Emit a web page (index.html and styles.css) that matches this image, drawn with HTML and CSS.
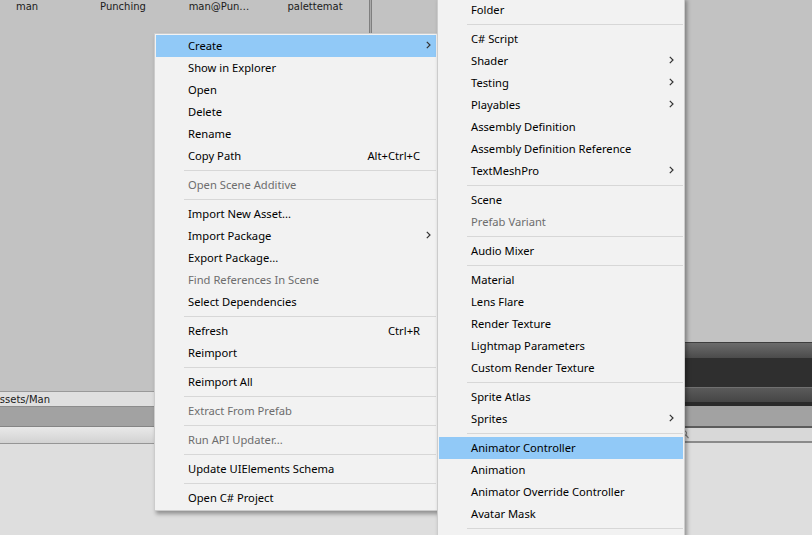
FILE: index.html
```html
<!DOCTYPE html>
<html>
<head>
<meta charset="utf-8">
<link rel="stylesheet" href="styles.css">
</head>
<body>
<div class="editor">
  <div class="left-panel">
    <div class="grid-area">
      <div class="grid-content">
        <div class="labels">
          <span class="label">man</span>
          <span class="label">Punching</span>
          <span class="label">man@Pun…</span>
          <span class="label">palettemat</span>
        </div>
      </div>
      <div class="splitter"></div>
      <div class="grid-rest"></div>
    </div>
    <div class="path-bar">Assets/Man</div>
    <div class="band"></div>
    <div class="toolbar"></div>
    <div class="panel-body"></div>
  </div>
  <div class="right-panel">
    <div class="rp-top"></div>
    <div class="rp-header"></div>
    <div class="rp-dark"></div>
    <div class="rp-header2"></div>
    <div class="rp-dark2"></div>
    <div class="rp-band"></div>
    <div class="search-bar">
      <svg class="search-icon" width="8" height="9" viewBox="0 0 8 9"><circle cx="3.2" cy="3.2" r="2.4" fill="none" stroke="#777" stroke-width="1"/><line x1="5" y1="5.2" x2="7.5" y2="8.2" stroke="#777" stroke-width="1.2"/></svg>
    </div>
    <div class="panel-body"></div>
  </div>
</div>

<div class="menu main-menu">
  <div class="item active"><span class="text">Create</span><span class="arrow"><svg width="5" height="8" viewBox="0 0 5 8"><polyline points="0.8,0.8 4,4 0.8,7.2" fill="none" stroke="#333" stroke-width="1.2"/></svg></span></div>
  <div class="item"><span class="text">Show in Explorer</span><span class="arrow"></span></div>
  <div class="item"><span class="text">Open</span><span class="arrow"></span></div>
  <div class="item"><span class="text">Delete</span><span class="arrow"></span></div>
  <div class="item"><span class="text">Rename</span><span class="arrow"></span></div>
  <div class="item"><span class="text">Copy Path</span><span class="shortcut">Alt+Ctrl+C</span><span class="arrow"></span></div>
  <div class="sep"></div>
  <div class="item disabled"><span class="text">Open Scene Additive</span><span class="arrow"></span></div>
  <div class="sep"></div>
  <div class="item"><span class="text">Import New Asset...</span><span class="arrow"></span></div>
  <div class="item"><span class="text">Import Package</span><span class="arrow"><svg width="5" height="8" viewBox="0 0 5 8"><polyline points="0.8,0.8 4,4 0.8,7.2" fill="none" stroke="#333" stroke-width="1.2"/></svg></span></div>
  <div class="item"><span class="text">Export Package...</span><span class="arrow"></span></div>
  <div class="item disabled"><span class="text">Find References In Scene</span><span class="arrow"></span></div>
  <div class="item"><span class="text">Select Dependencies</span><span class="arrow"></span></div>
  <div class="sep"></div>
  <div class="item"><span class="text">Refresh</span><span class="shortcut">Ctrl+R</span><span class="arrow"></span></div>
  <div class="item"><span class="text">Reimport</span><span class="arrow"></span></div>
  <div class="sep"></div>
  <div class="item"><span class="text">Reimport All</span><span class="arrow"></span></div>
  <div class="sep"></div>
  <div class="item disabled"><span class="text">Extract From Prefab</span><span class="arrow"></span></div>
  <div class="sep"></div>
  <div class="item disabled"><span class="text">Run API Updater...</span><span class="arrow"></span></div>
  <div class="sep"></div>
  <div class="item"><span class="text">Update UIElements Schema</span><span class="arrow"></span></div>
  <div class="sep"></div>
  <div class="item"><span class="text">Open C# Project</span><span class="arrow"></span></div>
</div>

<div class="menu sub-menu">
  <div class="item"><span class="text">Folder</span><span class="arrow"></span></div>
  <div class="sep"></div>
  <div class="item"><span class="text">C# Script</span><span class="arrow"></span></div>
  <div class="item"><span class="text">Shader</span><span class="arrow"><svg width="5" height="8" viewBox="0 0 5 8"><polyline points="0.8,0.8 4,4 0.8,7.2" fill="none" stroke="#333" stroke-width="1.2"/></svg></span></div>
  <div class="item"><span class="text">Testing</span><span class="arrow"><svg width="5" height="8" viewBox="0 0 5 8"><polyline points="0.8,0.8 4,4 0.8,7.2" fill="none" stroke="#333" stroke-width="1.2"/></svg></span></div>
  <div class="item"><span class="text">Playables</span><span class="arrow"><svg width="5" height="8" viewBox="0 0 5 8"><polyline points="0.8,0.8 4,4 0.8,7.2" fill="none" stroke="#333" stroke-width="1.2"/></svg></span></div>
  <div class="item"><span class="text">Assembly Definition</span><span class="arrow"></span></div>
  <div class="item"><span class="text">Assembly Definition Reference</span><span class="arrow"></span></div>
  <div class="item"><span class="text">TextMeshPro</span><span class="arrow"><svg width="5" height="8" viewBox="0 0 5 8"><polyline points="0.8,0.8 4,4 0.8,7.2" fill="none" stroke="#333" stroke-width="1.2"/></svg></span></div>
  <div class="sep"></div>
  <div class="item"><span class="text">Scene</span><span class="arrow"></span></div>
  <div class="item disabled"><span class="text">Prefab Variant</span><span class="arrow"></span></div>
  <div class="sep"></div>
  <div class="item"><span class="text">Audio Mixer</span><span class="arrow"></span></div>
  <div class="sep"></div>
  <div class="item"><span class="text">Material</span><span class="arrow"></span></div>
  <div class="item"><span class="text">Lens Flare</span><span class="arrow"></span></div>
  <div class="item"><span class="text">Render Texture</span><span class="arrow"></span></div>
  <div class="item"><span class="text">Lightmap Parameters</span><span class="arrow"></span></div>
  <div class="item"><span class="text">Custom Render Texture</span><span class="arrow"></span></div>
  <div class="sep"></div>
  <div class="item"><span class="text">Sprite Atlas</span><span class="arrow"></span></div>
  <div class="item"><span class="text">Sprites</span><span class="arrow"><svg width="5" height="8" viewBox="0 0 5 8"><polyline points="0.8,0.8 4,4 0.8,7.2" fill="none" stroke="#333" stroke-width="1.2"/></svg></span></div>
  <div class="sep"></div>
  <div class="item active"><span class="text">Animator Controller</span><span class="arrow"></span></div>
  <div class="item"><span class="text">Animation</span><span class="arrow"></span></div>
  <div class="item"><span class="text">Animator Override Controller</span><span class="arrow"></span></div>
  <div class="item"><span class="text">Avatar Mask</span><span class="arrow"></span></div>
  <div class="sep"></div>
  <div class="item"></div>
</div>
</body>
</html>
```

FILE: styles.css
```css
html, body {
  margin: 0;
  padding: 0;
  width: 812px;
  height: 535px;
  overflow: hidden;
  background: #dedede;
}

.editor {
  display: flex;
  width: 812px;
  height: 535px;
  font-family: "DejaVu Sans", Verdana, sans-serif;
}

/* ---------- left (project) panel ---------- */
.left-panel {
  width: 600px;
  display: flex;
  flex-direction: column;
}

.grid-area {
  height: 391px;
  background: #c2c2c2;
  display: flex;
}

.grid-content {
  width: 369px;
}

.labels {
  display: flex;
  gap: 42px;
  padding-top: 1px;
}

.label {
  width: 54px;
  display: flex;
  justify-content: center;
  white-space: nowrap;
  font-size: 10px;
  line-height: 12px;
  color: #1b1b1b;
}

.splitter {
  width: 1px;
  background: #a9a9a9;
  border-left: 1px solid #7f7f7f;
  border-right: 1px solid #7f7f7f;
}

.grid-rest {
  flex: 1;
}

.path-bar {
  height: 14px;
  border-top: 1px solid #999;
  border-bottom: 1px solid #8c8c8c;
  background: #dfdfdf;
  font-size: 10px;
  line-height: 16px;
  color: #1b1b1b;
  text-indent: -7px;
  white-space: nowrap;
  overflow: hidden;
}

.band {
  height: 19px;
  background: #a2a2a2;
  border-bottom: 1px solid #858585;
}

.toolbar {
  height: 16px;
  background: linear-gradient(#e9e9e9, #d2d2d2);
  border-bottom: 1px solid #959595;
}

.panel-body {
  flex: 1;
  background: #dedede;
}

/* ---------- right panel ---------- */
.right-panel {
  flex: 1;
  display: flex;
  flex-direction: column;
}

.rp-top {
  height: 342px;
  background: #c2c2c2;
}

.rp-header {
  height: 15px;
  border-top: 1px solid #3e3e3e;
  background: linear-gradient(#6c6c6c, #4b4b4b);
}

.rp-dark {
  height: 29px;
  background: #2f2f2f;
}

.rp-header2 {
  height: 14px;
  border-top: 1px solid #707070;
  background: linear-gradient(#5a5a5a, #454545);
}

.rp-dark2 {
  height: 4px;
  background: #2a2a2a;
}

.rp-band {
  height: 20px;
  background: #a2a2a2;
  border-bottom: 2px solid #5c5c5c;
}

.search-bar {
  height: 13px;
  background: #d8d8d8;
  border-bottom: 2px solid #8a8a8a;
  display: flex;
  align-items: center;
  padding-left: 81px;
}

.search-icon {
  display: block;
}

/* ---------- context menus ---------- */
.menu {
  position: absolute;
  background: #f2f2f2;
  border: 1px solid #cccccc;
  padding: 1px;
  box-shadow: 2px 3px 4px rgba(0, 0, 0, 0.35);
  font-family: "Segoe UI", "Noto Sans", "Open Sans", sans-serif;
  font-size: 11.2px;
  color: #000;
}

.main-menu {
  left: 154px;
  top: 33px;
  width: 280px;
}

.sub-menu {
  left: 437px;
  top: -3px;
  width: 244px;
}

.item {
  box-sizing: border-box;
  height: 22px;
  display: flex;
  align-items: center;
  padding-left: 32px;
  padding-bottom: 2px;
  white-space: nowrap;
}

.item.active {
  background: #91c9f7;
}

.item.disabled {
  color: #6d6d6d;
}

.text {
  flex: 1;
}

.shortcut {
  padding-right: 1px;
}

.arrow {
  width: 15px;
  display: flex;
  justify-content: center;
  align-items: center;
}

.sub-menu .arrow {
  width: 24px;
}

.arrow svg {
  display: block;
}

.sep {
  height: 7px;
  display: flex;
  align-items: center;
  padding-left: 28px;
}

.sep::before {
  content: "";
  flex: 1;
  height: 1px;
  background: #d7d7d7;
}
```
